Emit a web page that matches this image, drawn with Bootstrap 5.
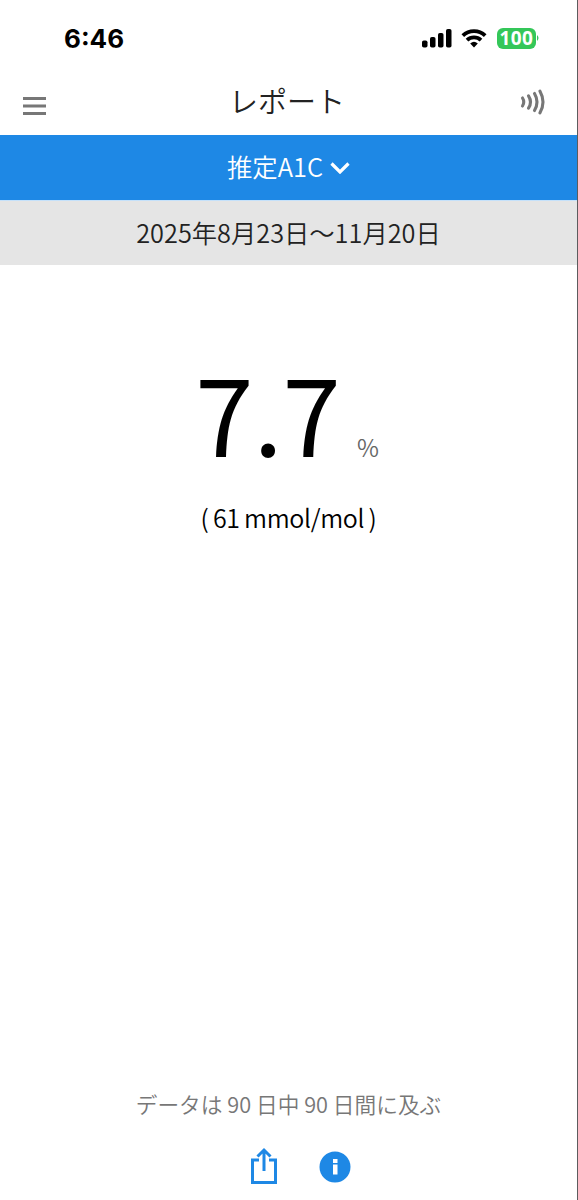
<!DOCTYPE html>
<html lang="ja">
<head>
    <meta charset="UTF-8">
    <meta name="viewport" content="width=device-width, initial-scale=1.0">
    <title>レポート</title>
    <link href="https://cdn.jsdelivr.net/npm/bootstrap@5.3.3/dist/css/bootstrap.min.css" rel="stylesheet">
    <style>
        body {
            font-family: "Noto Sans CJK JP", sans-serif;
            color: #222;
            background: #fff;
            line-height: 1;
        }
        .screen { height: 1200px; border-right: 1px solid #5c5c5e; }
        .status-bar { height: 76px; padding: 0 38px 0 64px; color: #000; }
        .clock { font: 700 26px/1 Inter, sans-serif; padding-top: 2px; }
        .battery-level {
            width: 39px;
            height: 21px;
            margin-left: 9px;
            border-radius: 6px;
            background: #34c759;
            font: 700 19px/21px "Open Sans", sans-serif;
            letter-spacing: .4px;
        }
        .top-bar { height: 59px; padding: 0 31px 0 23px; }
        .menu-icon { margin-top: 20px; }
        .page-title { font-size: 29px; font-weight: 350; margin: 7px 0 0 8px; }
        .signal-icon { margin-top: 13px; }
        .report-type {
            height: 66px;
            background: #1e88e5;
            border: 0;
            border-bottom: 1px solid #c5e1fa;
            font-size: 25.4px;
            font-weight: 350;
            padding: 0 0 1px;
        }
        .chevron { margin-left: 7px; }
        .period { height: 64px; background: #e5e5e5; font-size: 25.3px; font-weight: 350; padding-bottom: 1px; }
        .result { padding-top: 94px; color: #000; }
        .a1c-value { font-size: 105px; margin-left: -3px; }
        .a1c-unit { font-size: 24px; font-weight: 350; color: #666; margin-left: 16px; }
        .mmol { font-size: 25px; font-weight: 350; letter-spacing: -.35px; word-spacing: -.8px; margin-top: 41px; }
        .coverage { font-size: 21.7px; font-weight: 350; color: #777; }
        .bottom-tools { height: 85px; gap: 42px; padding: 32px 0 0 24px; }
    </style>
</head>
<body>
    <div class="screen d-flex flex-column">
        <!-- Status bar -->
        <div class="status-bar d-flex align-items-center justify-content-between">
            <div class="clock">6:46</div>
            <div class="d-flex align-items-center">
                <svg width="30" height="20" viewBox="0 0 30 20">
                    <rect x="0" y="12.5" width="5.5" height="7" rx="1.8"/>
                    <rect x="8" y="9" width="5.5" height="10.5" rx="1.8"/>
                    <rect x="16" y="5" width="5.5" height="14.5" rx="1.8"/>
                    <rect x="24" y="1" width="5.5" height="18.5" rx="1.8"/>
                </svg>
                <svg class="ms-2" width="28" height="20" viewBox="0 0 28 20" fill="none" stroke="#000" stroke-width="3.8">
                    <path d="M2.8 7.7a16.2 16.2 0 0 1 22.4 0"/>
                    <path d="M7 12.2a10.2 10.2 0 0 1 14 0"/>
                    <path d="M10.2 15.4a5.7 5.7 0 0 1 7.6 0L14 19.4z" fill="#000" stroke="none"/>
                </svg>
                <div class="battery-level text-white text-center">100</div>
                <svg width="3" height="8" viewBox="0 0 3 8"><path d="M1 1q3 3 0 6z" fill="#34c759"/></svg>
            </div>
        </div>

        <!-- Title bar -->
        <div class="top-bar d-flex align-items-start justify-content-between">
            <svg class="menu-icon" width="23" height="20" viewBox="0 0 23 20" fill="#777">
                <path d="M0 1h23v3H0zM0 8.5h23v3H0zM0 16h23v3H0z"/>
            </svg>
            <h1 class="page-title">レポート</h1>
            <svg class="signal-icon" width="26" height="26" viewBox="0 0 26 26" fill="none" stroke="#777" stroke-width="3.1" stroke-linecap="round">
                <path d="M2.5 9q2.5 4 0 8"/>
                <path d="M8.5 6.8q4 6.2 0 12.4"/>
                <path d="M14.5 4.5q5 8.5 0 17"/>
                <path d="M20 2.2q6 10.8 0 21.6"/>
            </svg>
        </div>

        <button type="button" class="report-type w-100 text-white d-flex align-items-center justify-content-center">
            推定A1C
            <svg class="chevron" width="20" height="13" viewBox="0 0 20 13" fill="none" stroke="#fff" stroke-width="3.2">
                <path d="M1.5 2.5L10 11l8.5-8.5"/>
            </svg>
        </button>
        <div class="period d-flex align-items-center justify-content-center">2025年8月23日～11月20日</div>

        <!-- Result -->
        <div class="result flex-grow-1 text-center">
            <div class="d-flex align-items-baseline justify-content-center">
                <span class="a1c-value">7.7</span>
                <span class="a1c-unit">%</span>
            </div>
            <div class="mmol">( 61 mmol/mol )</div>
        </div>

        <div class="coverage text-center">データは 90 日中 90 日間に及ぶ</div>
        <div class="bottom-tools d-flex justify-content-center">
            <svg width="26" height="38" viewBox="0 0 26 38" fill="none" stroke="#1e88e5" stroke-width="3">
                <path d="M8 13H1.5v22.5h23V13H18"/>
                <path d="M13 24V3M6.5 9.500L13 3l6.500 6.500"/>
            </svg>
            <svg width="32" height="38" viewBox="0 0 32 38">
                <circle cx="16" cy="20" r="15.5" fill="#1e88e5"/>
                <path d="M14 12h4.500v4H14zM14 17.500h4.500v10H14z" fill="#fff"/>
            </svg>
        </div>
    </div>
    <script src="https://cdn.jsdelivr.net/npm/bootstrap@5.3.3/dist/js/bootstrap.bundle.min.js"></script>
</body>
</html>
